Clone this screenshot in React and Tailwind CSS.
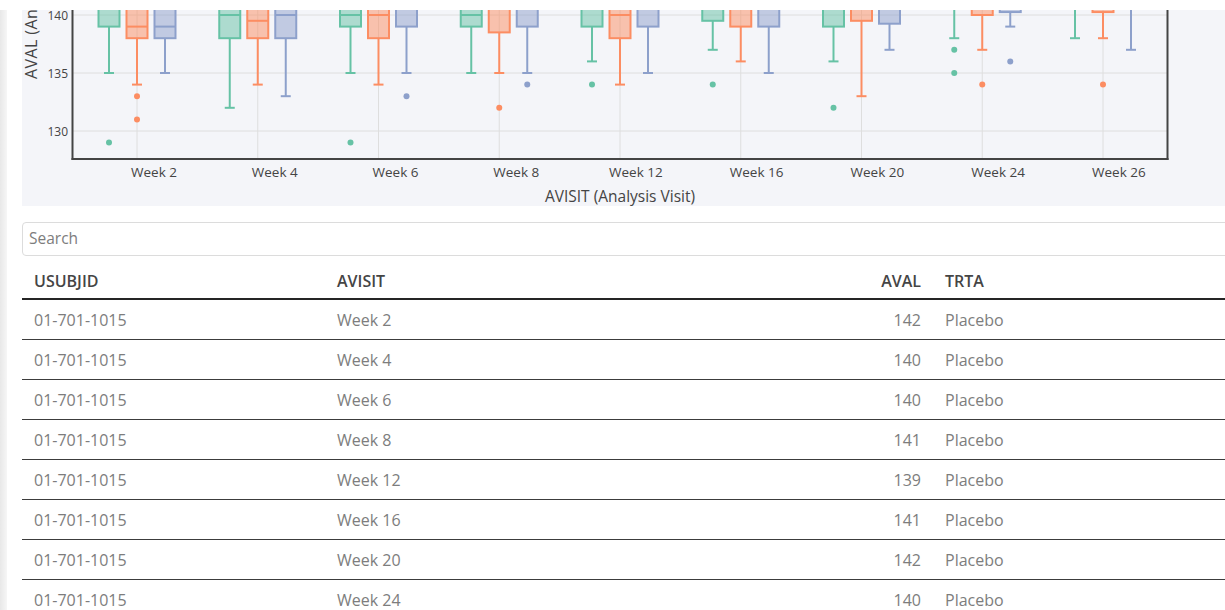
import React from 'react';

const WEEKS = ['Week 2', 'Week 4', 'Week 6', 'Week 8', 'Week 12', 'Week 16', 'Week 20', 'Week 24', 'Week 26'];

const ARMS = [
  { stroke: '#66c2a5', fill: 'rgba(102,194,165,0.5)' },
  { stroke: '#fc8d62', fill: 'rgba(252,141,98,0.5)' },
  { stroke: '#8da0cb', fill: 'rgba(141,160,203,0.5)' },
];

// per visit, per arm: [q1, median, lower fence, outliers]
const BOXES = [
  [[139, null, 135, [129]], [138, 139, 134, [133, 131]], [138, 139, 135, []]],
  [[138, 140, 132, []], [138, 139.5, 134, []], [138, 140, 133, []]],
  [[139, 140, 135, [129]], [138, 140, 134, []], [139, null, 135, [133]]],
  [[139, 140, 135, []], [138.5, null, 135, [132]], [139, null, 135, [134]]],
  [[139, null, 136, [134]], [138, 140, 134, []], [139, null, 135, []]],
  [[139.5, null, 137, [134]], [139, null, 136, []], [139, null, 135, []]],
  [[139, null, 136, [132]], [139.5, null, 133, []], [139.25, null, 137, []]],
  [[141, null, 138, [137, 135]], [140, null, 137, [134]], [140.25, null, 139, [136]]],
  [[141, null, 138, []], [140.25, null, 138, [134]], [141, null, 137, []]],
];

const ROWS = [
  ['Week 2', 142],
  ['Week 4', 140],
  ['Week 6', 140],
  ['Week 8', 141],
  ['Week 12', 139],
  ['Week 16', 141],
  ['Week 20', 142],
  ['Week 24', 140],
];

const PLOT_LEFT = 50.5;
const PLOT_RIGHT = 1145.5;
const PLOT_BOTTOM = 149;
const yPos = (v) => 5 + (140 - v) * 11.6;
const xPos = (i) => 115 + i * 120.75;

const BoxPlot = () => (
  <svg width="1218" height="196" className="block">
    {/* grid */}
    {[140, 135, 130].map((v) => (
      <line key={v} x1={PLOT_LEFT} x2={PLOT_RIGHT} y1={yPos(v)} y2={yPos(v)} stroke="#dedede" strokeWidth="1" />
    ))}
    {WEEKS.map((w, i) => (
      <line key={w} x1={xPos(i)} x2={xPos(i)} y1="0" y2={PLOT_BOTTOM} stroke="#dedede" strokeWidth="1" />
    ))}

    {/* boxes */}
    {BOXES.map((group, i) =>
      group.map(([q1, med, lo, outs], a) => {
        const cx = xPos(i) + (a - 1) * 28;
        const { stroke, fill } = ARMS[a];
        const top = yPos(144);
        return (
          <g key={`${i}-${a}`}>
            <line x1={cx} x2={cx} y1={yPos(q1)} y2={yPos(lo)} stroke={stroke} strokeWidth="2" />
            <line x1={cx - 5} x2={cx + 5} y1={yPos(lo)} y2={yPos(lo)} stroke={stroke} strokeWidth="2" />
            <rect x={cx - 10.5} y={top} width="21" height={yPos(q1) - top} fill={fill} stroke={stroke} strokeWidth="2" />
            {med !== null && (
              <line x1={cx - 10.5} x2={cx + 10.5} y1={yPos(med)} y2={yPos(med)} stroke={stroke} strokeWidth="2" />
            )}
            {outs.map((o) => (
              <circle key={o} cx={cx} cy={yPos(o)} r="3" fill={stroke} />
            ))}
          </g>
        );
      })
    )}

    {/* axes */}
    <line x1={PLOT_LEFT} x2={PLOT_LEFT} y1="0" y2={PLOT_BOTTOM + 1} stroke="#444" strokeWidth="2" />
    <line x1={PLOT_RIGHT} x2={PLOT_RIGHT} y1="0" y2={PLOT_BOTTOM + 1} stroke="#444" strokeWidth="2" />
    <line x1={PLOT_LEFT - 1} x2={PLOT_RIGHT + 1} y1={PLOT_BOTTOM} y2={PLOT_BOTTOM} stroke="#444" strokeWidth="2" />

    {[140, 135, 130].map((v) => (
      <text key={v} x="46" y={yPos(v) + 4.5} textAnchor="end" fontSize="12" fill="#444">
        {v}
      </text>
    ))}
    {WEEKS.map((w, i) => (
      <text key={w} x={xPos(i) - (w.length > 6 ? 11 : 6)} y="166.5" fontSize="13.5" fill="#444">
        {w}
      </text>
    ))}
    <text x="598" y="191.5" textAnchor="middle" fontSize="15.5" fill="#444">
      AVISIT (Analysis Visit)
    </text>
    <text transform="translate(15 69) rotate(-90)" fontSize="16" letterSpacing="0.4" fill="#444">
      AVAL (Analysis Value)
    </text>
  </svg>
);

const Cell = ({ children, right }) => (
  <div className={`px-3 flex items-center ${right ? 'justify-end' : ''}`}>{children}</div>
);

export default function App() {
  return (
    <div className="h-[610px] w-full overflow-hidden bg-white pt-[10px] font-['Open_Sans',sans-serif]">
      <div className="flex h-full">
        <div className="w-[7px] shrink-0 bg-linear-to-r from-[#e8e8e8] to-[#f6f6f6]" />
        <div className="w-[1218px] shrink-0 ml-[15px]">
          <div className="h-[196px] bg-[#f4f5f9]">
            <BoxPlot />
          </div>

          <div className="mt-4 h-[34px] rounded border border-[#dcdcdc] flex items-center px-[6px]">
            <span className="text-[15.5px] text-[#7d7d7d]">Search</span>
          </div>

          <div className="mt-2 grid grid-cols-[303px_300px_308px_1fr] h-[36px] border-b-2 border-[#252525] text-[16px] font-semibold text-[#454545]">
            <Cell>USUBJID</Cell>
            <Cell>AVISIT</Cell>
            <Cell right>AVAL</Cell>
            <Cell>TRTA</Cell>
          </div>

          {ROWS.map(([visit, aval]) => (
            <div
              key={visit}
              className="grid grid-cols-[303px_300px_308px_1fr] h-[40px] border-b border-[#3c3c3c] text-[16px] text-[#7d7d7d]"
            >
              <Cell>01-701-1015</Cell>
              <Cell>{visit}</Cell>
              <Cell right>{aval}</Cell>
              <Cell>Placebo</Cell>
            </div>
          ))}
        </div>
      </div>
    </div>
  );
}
